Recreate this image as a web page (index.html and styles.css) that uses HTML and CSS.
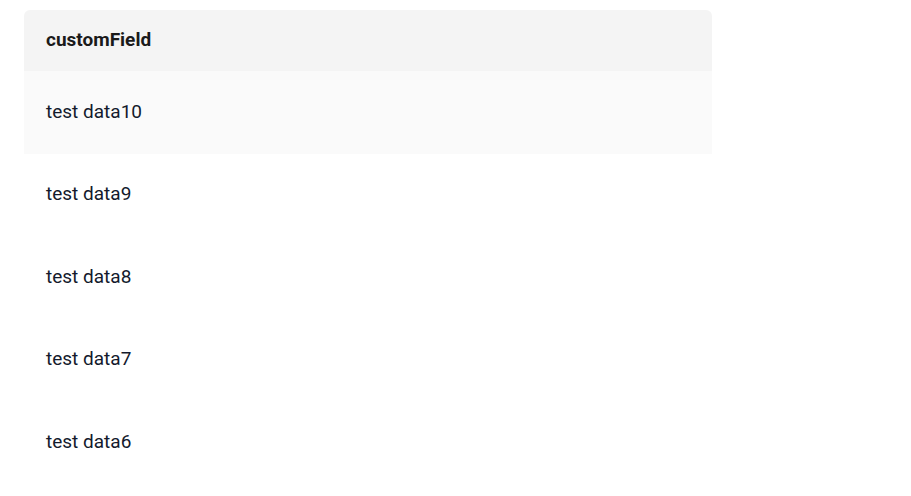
FILE: index.html
```html
<!DOCTYPE html>
<html>
<head>
<meta charset="utf-8">
<link rel="stylesheet" href="styles.css">
</head>
<body>
<div class="page">
  <table class="grid">
    <thead>
      <tr><th class="head-cell">customField</th></tr>
    </thead>
    <tbody>
      <tr class="row row-hover"><td class="cell">test data10</td></tr>
      <tr class="row"><td class="cell">test data9</td></tr>
      <tr class="row"><td class="cell">test data8</td></tr>
      <tr class="row"><td class="cell">test data7</td></tr>
      <tr class="row"><td class="cell">test data6</td></tr>
    </tbody>
  </table>
</div>
</body>
</html>
```
FILE: styles.css
```css
html, body {
  margin: 0;
  padding: 0;
  background: #ffffff;
  overflow: hidden;
}
.page {
  padding: 10px 0 0 24px;
  font-family: Roboto, "Noto Sans", sans-serif;
}
.grid {
  width: 688px;
  border-collapse: separate;
  border-spacing: 0;
}
.head-cell {
  background: #f4f4f4;
  height: 61px;
  padding: 0 22px 2px;
  box-sizing: border-box;
  text-align: left;
  font-weight: 700;
  font-size: 19px;
  color: #1a1a1a;
  border-radius: 6px 6px 0 0;
}
.cell {
  height: 82.5px;
  padding: 0 22px 2px;
  box-sizing: border-box;
  font-size: 19px;
  color: #131a2c;
}
.row-hover .cell {
  background: #fafafa;
}
```
